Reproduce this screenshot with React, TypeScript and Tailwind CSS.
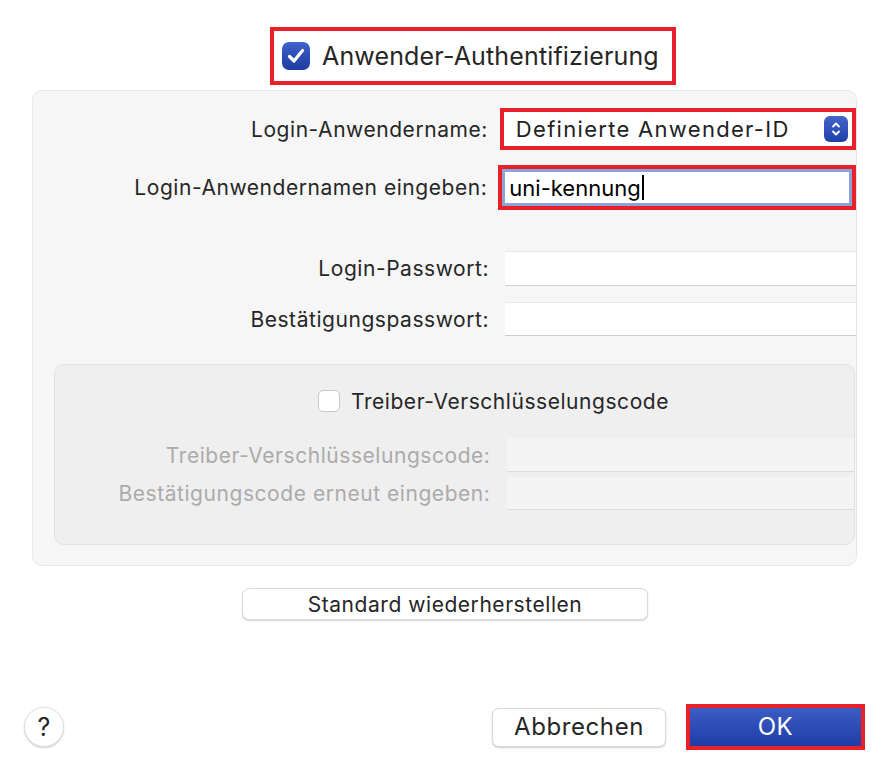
import React from "react";

const font = "font-['Inter','Noto_Sans',sans-serif]";
const label = "text-[21px] tracking-[0.55px] leading-none";

function CheckIcon() {
  return (
    <svg width="22" height="22" viewBox="0 0 22 22" fill="none">
      <path d="M4.5 11.5 L9 16 L17.5 5.5" stroke="white" strokeWidth="3.2" strokeLinecap="round" strokeLinejoin="round" />
    </svg>
  );
}

function Stepper() {
  return (
    <div className="w-[24px] h-[26px] rounded-[6px] bg-gradient-to-b from-[#4466cc] to-[#2040a8] flex items-center justify-center">
      <svg width="12" height="18" viewBox="0 0 12 18" fill="none">
        <path d="M3 6.5 L6 3.5 L9 6.5" stroke="white" strokeWidth="1.8" strokeLinecap="round" strokeLinejoin="round" />
        <path d="M3 11.5 L6 14.5 L9 11.5" stroke="white" strokeWidth="1.8" strokeLinecap="round" strokeLinejoin="round" />
      </svg>
    </div>
  );
}

export default function App() {
  return (
    <div className={`w-[894px] h-[774px] bg-white flex flex-col text-[#262626] ${font}`}>
      {/* Header checkbox */}
      <div className="pt-[27px] pl-[270px]">
        <div className="w-[406px] h-[58px] border-4 border-[#e8202a] flex items-center pl-[8px] gap-[12px]">
          <div className="w-[28px] h-[28px] rounded-[7px] bg-gradient-to-b from-[#3f62cc] to-[#1e3aa0] flex items-center justify-center">
            <CheckIcon />
          </div>
          <span className="text-[25px] leading-none tracking-[0.15px]">Anwender-Authentifizierung</span>
        </div>
      </div>

      {/* Main panel */}
      <div className="mt-[5px] ml-[32px] w-[825px] h-[476px] bg-[#f6f6f6] border border-[#e8e8e8] rounded-[10px] flex flex-col">
        {/* Row 1 */}
        <div className="mt-[17px] flex items-center h-[42px]">
          <div className={`w-[456px] text-right ${label}`}>Login-Anwendername:</div>
          <div className="ml-[12px] w-[357px] h-[42px] border-4 border-[#e8202a] bg-white flex items-center pl-[12px] pr-[4px] justify-between">
            <span className="text-[22px] tracking-[1.3px] leading-none text-[#222]">Definierte Anwender-ID</span>
            <Stepper />
          </div>
        </div>
        {/* Row 2 */}
        <div className="mt-[15px] flex items-center h-[45px]">
          <div className={`w-[456px] text-right ${label}`}>Login-Anwendernamen eingeben:</div>
          <div className="ml-[11px] w-[359px] h-[45px] border-4 border-[#e8202a] bg-white">
            <div className="w-full h-full border-[3px] border-[#8aa3d9] flex items-center pl-[4px]">
              <span className="text-[22px] leading-none text-black">uni-kennung</span>
              <span className="w-[2px] h-[25px] bg-black ml-[1px]" />
            </div>
          </div>
        </div>
        {/* Row 3 */}
        <div className="mt-[41px] flex items-center h-[35px]">
          <div className={`w-[456px] text-right ${label}`}>Login-Passwort:</div>
          <div className="ml-[16px] w-[351px] h-[35px] bg-white border-t border-[#e8e8e8] border-b border-b-[#cfcfcf]" />
        </div>
        {/* Row 4 */}
        <div className="mt-[16px] flex items-center h-[34px]">
          <div className={`w-[456px] text-right ${label}`}>Bestätigungspasswort:</div>
          <div className="ml-[16px] w-[351px] h-[34px] bg-white border-t border-[#e8e8e8] border-b border-b-[#cfcfcf]" />
        </div>

        {/* Inner panel */}
        <div className="mt-[28px] ml-[21px] w-[801px] h-[181px] bg-[#efefef] border border-[#e2e2e2] rounded-[10px] flex flex-col">
          <div className="mt-[25px] ml-[263px] flex items-center gap-[11px] h-[22px]">
            <div className="w-[22px] h-[22px] rounded-[5px] bg-white border border-[#c8c8c8]" />
            <span className={label}>Treiber-Verschlüsselungscode</span>
          </div>
          <div className="mt-[26px] flex items-center h-[34px]">
            <div className={`w-[436px] text-right ${label} text-[#ababab]`}>Treiber-Verschlüsselungscode:</div>
            <div className="ml-[17px] w-[347px] h-[34px] bg-[#f4f4f4] border-b border-[#dcdcdc]" />
          </div>
          <div className="mt-[5px] flex items-center h-[33px]">
            <div className={`w-[436px] text-right ${label} text-[#ababab]`}>Bestätigungscode erneut eingeben:</div>
            <div className="ml-[17px] w-[347px] h-[33px] bg-[#f4f4f4] border-b border-[#dcdcdc]" />
          </div>
        </div>
      </div>

      {/* Standard button */}
      <div className="mt-[22px] ml-[242px]">
        <div className={`w-[406px] h-[32px] bg-white rounded-[7px] border border-[#dadada] shadow-[0_1px_1.5px_rgba(0,0,0,0.18)] flex items-center justify-center ${label}`}>
          Standard wiederherstellen
        </div>
      </div>

      {/* Bottom row */}
      <div className="mt-[84px] flex items-center h-[46px]">
        <div className="ml-[24px] w-[40px] h-[40px] rounded-full bg-white border border-[#e0e0e0] shadow-[0_1px_2px_rgba(0,0,0,0.2)] flex items-center justify-center text-[25px] leading-none">?</div>
        <div className="ml-[428px] w-[174px] h-[39px] bg-white rounded-[7px] border border-[#dadada] shadow-[0_1px_2px_rgba(0,0,0,0.2)] flex items-center justify-center text-[24px] tracking-[0.6px] leading-none">
          Abbrechen
        </div>
        <div className="ml-[20px] w-[179px] h-[46px] border-4 border-[#e8202a] bg-white">
          <div className="w-full h-full bg-gradient-to-b from-[#3c5dc4] to-[#1f3ca6] flex items-center justify-center text-white text-[24px] tracking-[0.5px] leading-none">
            OK
          </div>
        </div>
      </div>
    </div>
  );
}
